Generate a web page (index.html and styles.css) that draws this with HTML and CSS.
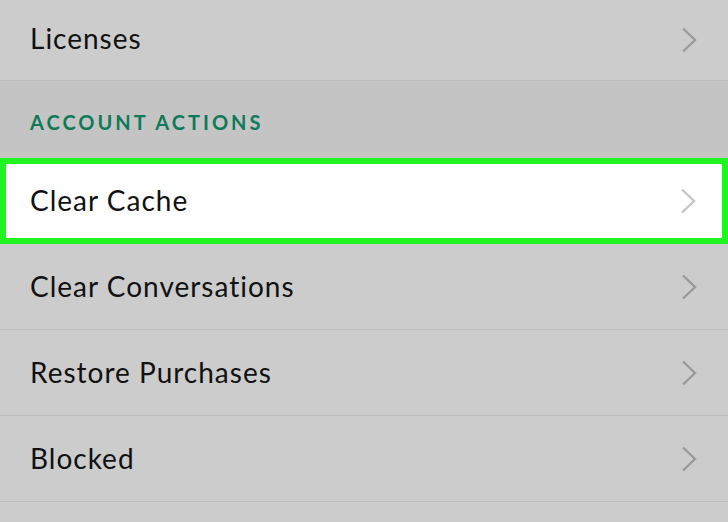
FILE: index.html
```html
<!DOCTYPE html>
<html lang="en">
<head>
  <meta charset="UTF-8">
  <meta name="viewport" content="width=device-width, initial-scale=1.0">
  <title>Settings</title>
  <link rel="stylesheet" href="styles.css">
</head>
<body>
  <ul class="settings">
    <li class="row first">
      <span>Licenses</span>
      <svg class="chev" viewBox="0 0 16 26"><path d="M2 1.5l12 11.5L2 24.5"/></svg>
    </li>
    <li class="section">ACCOUNT ACTIONS</li>
    <li class="row selected">
      <span>Clear Cache</span>
      <svg class="chev" viewBox="0 0 16 26"><path d="M2 1.5l12 11.5L2 24.5"/></svg>
    </li>
    <li class="row">
      <span>Clear Conversations</span>
      <svg class="chev" viewBox="0 0 16 26"><path d="M2 1.5l12 11.5L2 24.5"/></svg>
    </li>
    <li class="row">
      <span>Restore Purchases</span>
      <svg class="chev" viewBox="0 0 16 26"><path d="M2 1.5l12 11.5L2 24.5"/></svg>
    </li>
    <li class="row">
      <span>Blocked</span>
      <svg class="chev" viewBox="0 0 16 26"><path d="M2 1.5l12 11.5L2 24.5"/></svg>
    </li>
    <li class="row"></li>
  </ul>
</body>
</html>
```

FILE: styles.css
```css
body {
  margin: 0;
  background: #cccccc;
  font-family: Lato, "Open Sans", sans-serif;
  overflow: hidden;
}
.settings {
  list-style: none;
  margin: 0;
  padding: 0;
}
.row {
  display: flex;
  align-items: center;
  justify-content: space-between;
  height: 85px;
  padding: 0 30px 0 30px;
  background: #cccccc;
  border-bottom: 1px solid #bdbdbd;
  font-size: 28px;
  letter-spacing: 1px;
  color: #111;
}
.row.first {
  height: 80px;
}
.row.first span {
  top: -2px;
}
.row span {
  position: relative;
  top: -1px;
}
.chev {
  width: 16px;
  height: 26px;
  margin-right: 1px;
  fill: none;
  stroke: #9a9a9a;
  stroke-width: 2.4;
}
.section {
  height: 73px;
  display: flex;
  align-items: center;
  padding: 4px 0 0 30px;
  background: #c4c4c4;
  color: #0e7a58;
  font-size: 20px;
  font-weight: 700;
  letter-spacing: 3px;
}
.row.selected {
  height: 74px;
  padding: 0 25px 0 24px;
  background: #fff;
  border: 6px solid #21f521;
}
.selected .chev {
  stroke: #c6c6c6;
}
```
